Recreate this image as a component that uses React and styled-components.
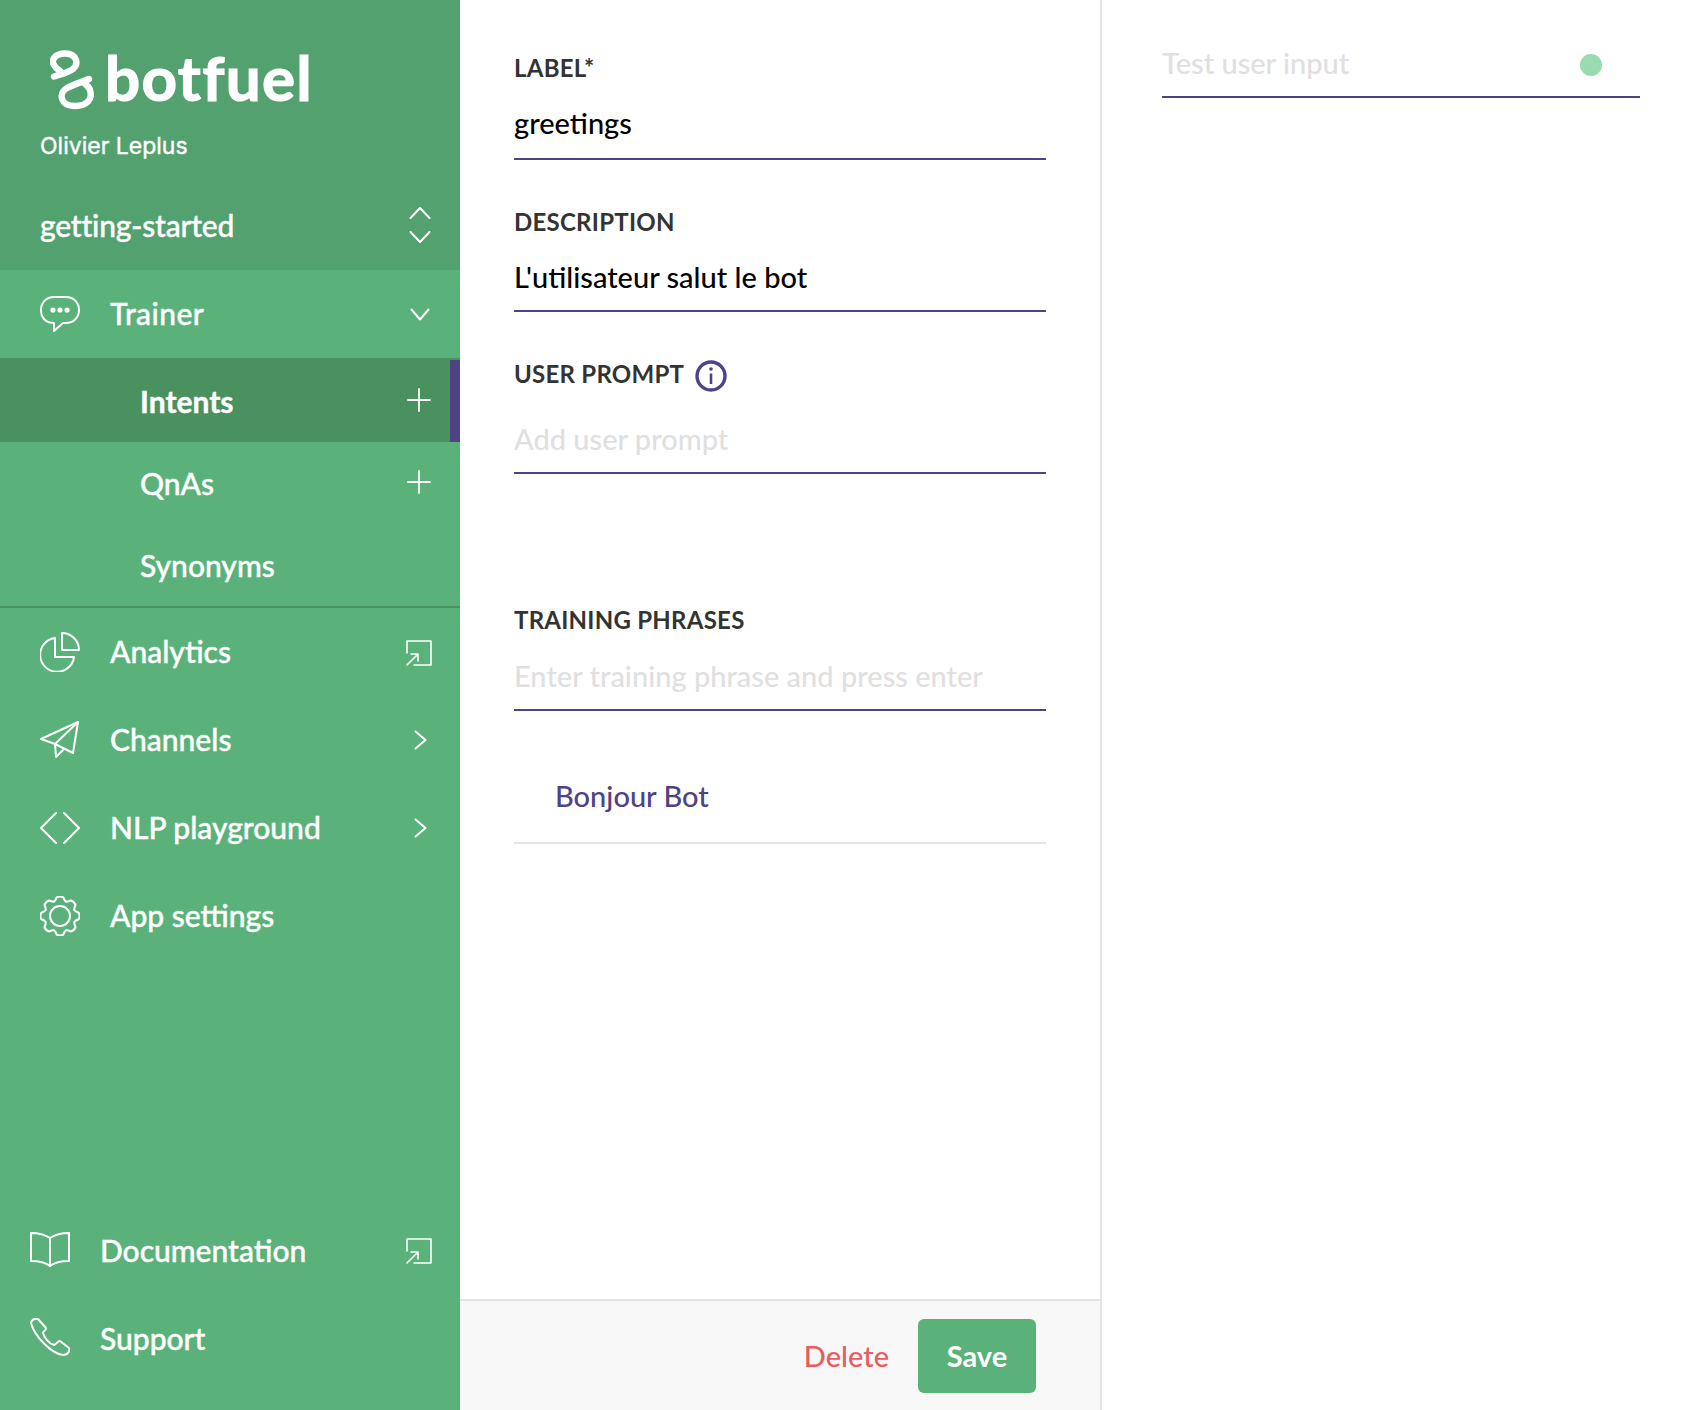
import styled, { createGlobalStyle } from "styled-components";

const GlobalStyle = createGlobalStyle`
  html, body {
    margin: 0;
    padding: 0;
    background: #fff;
    font-family: Lato, "Open Sans", sans-serif;
  }
  * {
    box-sizing: border-box;
  }
`

const LineIcon = ({ w = 40, h = 40, sw = 2, children }) => (
  <svg width={w} height={h} viewBox={`0 0 ${w} ${h}`} fill="none" stroke="#fff" strokeWidth={sw} strokeLinecap="round" strokeLinejoin="round">
    {children}
  </svg>
)

const BubbleIcon = () => (
  <LineIcon>
    <path d="M14 3H26C34 3 39 9 39 16C39 24 33 29 26 29H23L14 37V29C6 29 1 24 1 16C1 9 6 3 14 3Z" />
    <circle cx="13" cy="16" r="1.6" fill="#fff" />
    <circle cx="20" cy="16" r="1.6" fill="#fff" />
    <circle cx="27" cy="16" r="1.6" fill="#fff" />
  </LineIcon>
)

const PieIcon = () => (
  <LineIcon>
    <path d="M15 6A17 17 0 1 0 34 25H15Z" />
    <path d="M22 1A17 17 0 0 1 39 18H22Z" />
  </LineIcon>
)

const PlaneIcon = () => (
  <LineIcon>
    <path d="M38 2L1 19L15 24L33 33Z" />
    <path d="M38 2L15 24L16 37L24 29" />
  </LineIcon>
)

const CodeIcon = () => (
  <LineIcon>
    <path d="M16 5L1 20L16 35" />
    <path d="M24 5L39 20L24 35" />
  </LineIcon>
)

// 8 rounded teeth around the centre
const polar = (deg, r) => {
  const a = (deg * Math.PI) / 180
  return `${(20 + r * Math.cos(a)).toFixed(2)} ${(20 + r * Math.sin(a)).toFixed(2)}`
}

const gearPath = () => {
  let d = `M${polar(-90 - 22.5, 15.5)}`
  for (let i = 0; i < 8; i++) {
    const c = -90 + i * 45
    d += `Q${polar(c - 14, 16.5)} ${polar(c - 10, 19)}`
    d += `Q${polar(c, 20.5)} ${polar(c + 10, 19)}`
    d += `Q${polar(c + 14, 16.5)} ${polar(c + 22.5, 15.5)}`
  }
  return d + "Z"
}

const GearIcon = () => (
  <LineIcon>
    <path d={gearPath()} />
    <circle cx="20" cy="20" r="10" />
  </LineIcon>
)

const BookIcon = () => (
  <LineIcon>
    <path d="M20 8C14 4 7 3 1 3V31C8 31 15 32 20 36C25 32 32 31 39 31V3C33 3 26 4 20 8Z" />
    <path d="M20 8V36" />
  </LineIcon>
)

const PhoneIcon = () => (
  <LineIcon>
    <path d="M1 5C1 2 5 0 8 1L16 10C16 13 13 13 13 15C14 19 19 26 24 27C26 26 28 23 30 23L39 30C40 33 38 37 33 37C23 36 5 20 1 5Z" />
  </LineIcon>
)

const ExternalIcon = () => (
  <LineIcon w={28} h={28} sw={1.6}>
    <path d="M2 14V2H26V26H9" />
    <path d="M2 26L13 15M6 15H13V22" />
  </LineIcon>
)

const PlusIcon = () => (
  <LineIcon w={26} h={26} sw={1.8}>
    <path d="M13 2V24M2 13H24" />
  </LineIcon>
)

const ChevronRight = () => (
  <LineIcon w={13} h={20} sw={2}>
    <path d="M1.5 1.5L11.5 10L1.5 18.5" />
  </LineIcon>
)

const ChevronDown = () => (
  <LineIcon w={20} h={13} sw={2}>
    <path d="M1.5 1.5L10 11.5L18.5 1.5" />
  </LineIcon>
)

const UpDownIcon = () => (
  <LineIcon w={22} h={38} sw={2}>
    <path d="M1.5 12L11 2L20.5 12" />
    <path d="M1.5 26L11 36L20.5 26" />
  </LineIcon>
)

const InfoIcon = () => (
  <svg width="32" height="32" viewBox="0 0 32 32" fill="none" stroke="#4f4285">
    <circle cx="16" cy="16" r="14" strokeWidth="3.4" />
    <path d="M16 13.5V24" strokeWidth="2.6" />
    <circle cx="16" cy="9" r="1.8" fill="#4f4285" stroke="none" />
  </svg>
)

const LogoMark = () => (
  <svg width="46" height="64" viewBox="10 8 46 64" fill="none" stroke="#fff" strokeWidth="6.4" strokeLinecap="round" strokeLinejoin="round">
    <path d="M14 37.5C22 35 30 33 33 30C39 25 37 14.5 25 14.5C14 14.5 11 22 14 26C15 28 17 30 20 32" />
    <path d="M49 40C42 43 32 46 27 49C18 54 20 67 35 67C47 67 53 60 50 51C49 48 47 46 44 44" />
  </svg>
)

const App = () => {
  const navItems = [
    { label: "Analytics", icon: <PieIcon />, trail: <ExternalTrailStl><ExternalIcon /></ExternalTrailStl> },
    { label: "Channels", icon: <PlaneIcon />, trail: <TrailStl><ChevronRight /></TrailStl> },
    { label: "NLP playground", icon: <CodeIcon />, trail: <TrailStl><ChevronRight /></TrailStl> },
    { label: "App settings", icon: <GearIcon /> },
  ]

  return (
    <PageStl>
      <GlobalStyle />
      <SidebarStl>
        <div>
          <HeaderStl>
            <LogoStl>
              <LogoMark />
              <LogoTextStl>botfuel</LogoTextStl>
            </LogoStl>
            <UserNameStl>Olivier Leplus</UserNameStl>
            <ProjectStl>
              <ProjectNameStl>getting-started</ProjectNameStl>
              <TrailStl><UpDownIcon /></TrailStl>
            </ProjectStl>
          </HeaderStl>

          <NavRowStl>
            <IconBoxStl><BubbleIcon /></IconBoxStl>
            <RowTextStl $spacing={0.4}>Trainer</RowTextStl>
            <TrailStl><ChevronDown /></TrailStl>
          </NavRowStl>

          <SubRowStl $active>
            <span>Intents</span>
            <PlusTrailStl><PlusIcon /></PlusTrailStl>
          </SubRowStl>
          <SubRowStl>
            <span>QnAs</span>
            <PlusTrailStl><PlusIcon /></PlusTrailStl>
          </SubRowStl>
          <SubRowStl>
            <span>Synonyms</span>
          </SubRowStl>
          <DividerStl />

          {navItems.map((item) => (
            <NavRowStl key={item.label}>
              <IconBoxStl>{item.icon}</IconBoxStl>
              <RowTextStl>{item.label}</RowTextStl>
              {item.trail}
            </NavRowStl>
          ))}
        </div>

        <BottomNavStl>
          <NavRowStl $bottom>
            <IconBoxStl><BookIcon /></IconBoxStl>
            <span>Documentation</span>
            <ExternalTrailStl><ExternalIcon /></ExternalTrailStl>
          </NavRowStl>
          <NavRowStl $bottom>
            <IconBoxStl><PhoneIcon /></IconBoxStl>
            <span>Support</span>
          </NavRowStl>
        </BottomNavStl>
      </SidebarStl>

      <EditorStl>
        <FormStl>
          <LabelStl>LABEL*</LabelStl>
          <InputStl $gap={10} $lift={6} readOnly value="greetings" />

          <LabelStl $top={46}>DESCRIPTION</LabelStl>
          <InputStl $gap={8} readOnly value="L'utilisateur salut le bot" />

          <LabelStl $top={46}>
            USER PROMPT
            <InfoIcon />
          </LabelStl>
          <InputStl $gap={18} readOnly placeholder="Add user prompt" />

          <LabelStl $top={130}>TRAINING PHRASES</LabelStl>
          <InputStl $gap={9} readOnly placeholder="Enter training phrase and press enter" />

          <PhraseStl>Bonjour Bot</PhraseStl>
        </FormStl>

        <FooterStl>
          <DeleteStl>Delete</DeleteStl>
          <SaveStl>Save</SaveStl>
        </FooterStl>
      </EditorStl>

      <TesterStl>
        <TestInputRowStl>
          <TestInputStl readOnly placeholder="Test user input" />
          <StatusDotStl />
        </TestInputRowStl>
      </TesterStl>
    </PageStl>
  )
}

export default App


const PageStl = styled.div`
  display: flex;
  width: 1700px;
  height: 1410px;
  overflow: hidden;
  font-family: Lato, "Open Sans", sans-serif;
`

const SidebarStl = styled.nav`
  width: 460px;
  flex-shrink: 0;
  display: flex;
  flex-direction: column;
  justify-content: space-between;
  background: #5ab27a;
  color: #fff;
  font-size: 30px;
  font-weight: 500;
  -webkit-text-stroke: 0.4px #fff;
`

const HeaderStl = styled.div`
  height: 270px;
  padding: 47px 0 0 40px;
  background: #52a16f;
`

const LogoStl = styled.div`
  display: flex;
  align-items: center;
  gap: 9px;
  padding-left: 10px;
  height: 64px;
`

const LogoTextStl = styled.span`
  margin-top: -4px;
  font-family: Lato, sans-serif;
  font-size: 62px;
  font-weight: 700;
  line-height: 62px;
  letter-spacing: 1.3px;
  -webkit-text-stroke: 1.2px #fff;
`

const UserNameStl = styled.div`
  margin-top: 20px;
  font-family: Inter, "Open Sans", sans-serif;
  font-size: 23px;
  font-weight: 400;
  line-height: 30px;
`

const ProjectStl = styled.div`
  display: flex;
  align-items: center;
  height: 40px;
  margin-top: 44px;
  padding-right: 20px;
`

const ProjectNameStl = styled.span`
  letter-spacing: -0.2px;
`

const TrailStl = styled.div`
  margin-left: auto;
  width: 40px;
  display: flex;
  justify-content: center;
  align-items: center;
`

const PlusTrailStl = styled(TrailStl)`
  margin-top: -3px;
  margin-right: 1px;
`

const ExternalTrailStl = styled(TrailStl)`
  margin-top: 2px;
  margin-right: 1px;
`

const IconBoxStl = styled.div`
  width: 40px;
  height: 40px;
  margin-right: 30px;
  display: flex;
  align-items: center;
  justify-content: center;
`

const RowTextStl = styled.span`
  margin-bottom: 2px;
  letter-spacing: ${(p) => p.$spacing || 0}px;
`

const NavRowStl = styled.div`
  display: flex;
  align-items: center;
  height: 88px;
  padding: 0 20px 0 ${(p) => (p.$bottom ? 30 : 40)}px;
`

const SubRowStl = styled.div`
  position: relative;
  display: flex;
  align-items: center;
  height: ${(p) => (p.$active ? 84 : 82)}px;
  padding: ${(p) => (p.$active ? "2px" : "0")} 20px 0 140px;
  background: ${(p) => (p.$active ? "#4a9160" : "transparent")};
  font-weight: ${(p) => (p.$active ? 700 : 500)};

  ${(p) => p.$active && `
    &::after {
      content: "";
      position: absolute;
      top: 2px;
      right: 0;
      bottom: 0;
      width: 10px;
      background: #4f4285;
    }
  `}
`

const DividerStl = styled.div`
  height: 2px;
  background: #4a9160;
`

const BottomNavStl = styled.div`
  padding-bottom: 28px;
`

const EditorStl = styled.main`
  width: 642px;
  flex-shrink: 0;
  display: flex;
  flex-direction: column;
  border-right: 2px solid #e4e4e4;
`

const FormStl = styled.div`
  flex: 1;
  display: flex;
  flex-direction: column;
  padding: 52px 54px 0;
`

const LabelStl = styled.div`
  display: flex;
  align-items: center;
  gap: 11px;
  height: 30px;
  margin-top: ${(p) => p.$top || 0}px;
  color: #333;
  font-size: 24px;
  font-weight: 700;
  letter-spacing: 0.25px;

  svg {
    margin-top: 5px;
  }
`

const InputStl = styled.input`
  display: block;
  width: 100%;
  height: 68px;
  margin-top: ${(p) => p.$gap}px;
  padding: 0 0 ${(p) => p.$lift || 2}px;
  border: 0;
  border-bottom: 2px solid #4f4285;
  outline: none;
  background: transparent;
  color: #000;
  font-family: Lato, sans-serif;
  font-size: 29px;
  font-weight: 500;

  &::placeholder {
    color: #e0e0e0;
    opacity: 1;
  }
`

const PhraseStl = styled.div`
  display: flex;
  align-items: center;
  height: 84px;
  margin-top: 49px;
  padding: 0 0 12px 41px;
  border-bottom: 2px solid #e4e4e4;
  color: #4f4285;
  font-size: 29px;
  font-weight: 500;
`

const FooterStl = styled.div`
  display: flex;
  align-items: center;
  justify-content: flex-end;
  gap: 29px;
  height: 111px;
  padding: 0 64px 0 0;
  border-top: 2px solid #e4e4e4;
  background: #f8f8f8;
`

const DeleteStl = styled.button`
  padding: 0;
  border: 0;
  background: none;
  color: #e85d5d;
  font-family: Lato, sans-serif;
  font-size: 29px;
  font-weight: 500;
`

const SaveStl = styled.button`
  width: 118px;
  height: 74px;
  border: 0;
  border-radius: 6px;
  background: #5ab27a;
  color: #fff;
  font-family: Lato, sans-serif;
  font-size: 29px;
  font-weight: 700;
`

const TesterStl = styled.aside`
  flex: 1;
  padding: 26px 60px 0 60px;
`

const TestInputRowStl = styled.div`
  display: flex;
  align-items: center;
  height: 72px;
  padding: 8px 38px 0 0;
  border-bottom: 2px solid #4f4285;
`

const TestInputStl = styled.input`
  flex: 1;
  min-width: 0;
  margin-bottom: 6px;
  padding: 0;
  border: 0;
  outline: none;
  background: transparent;
  font-family: Lato, sans-serif;
  font-size: 29px;
  font-weight: 500;

  &::placeholder {
    color: #e0e0e0;
    opacity: 1;
  }
`

const StatusDotStl = styled.div`
  width: 22px;
  height: 22px;
  border-radius: 50%;
  background: #98dbb0;
`
